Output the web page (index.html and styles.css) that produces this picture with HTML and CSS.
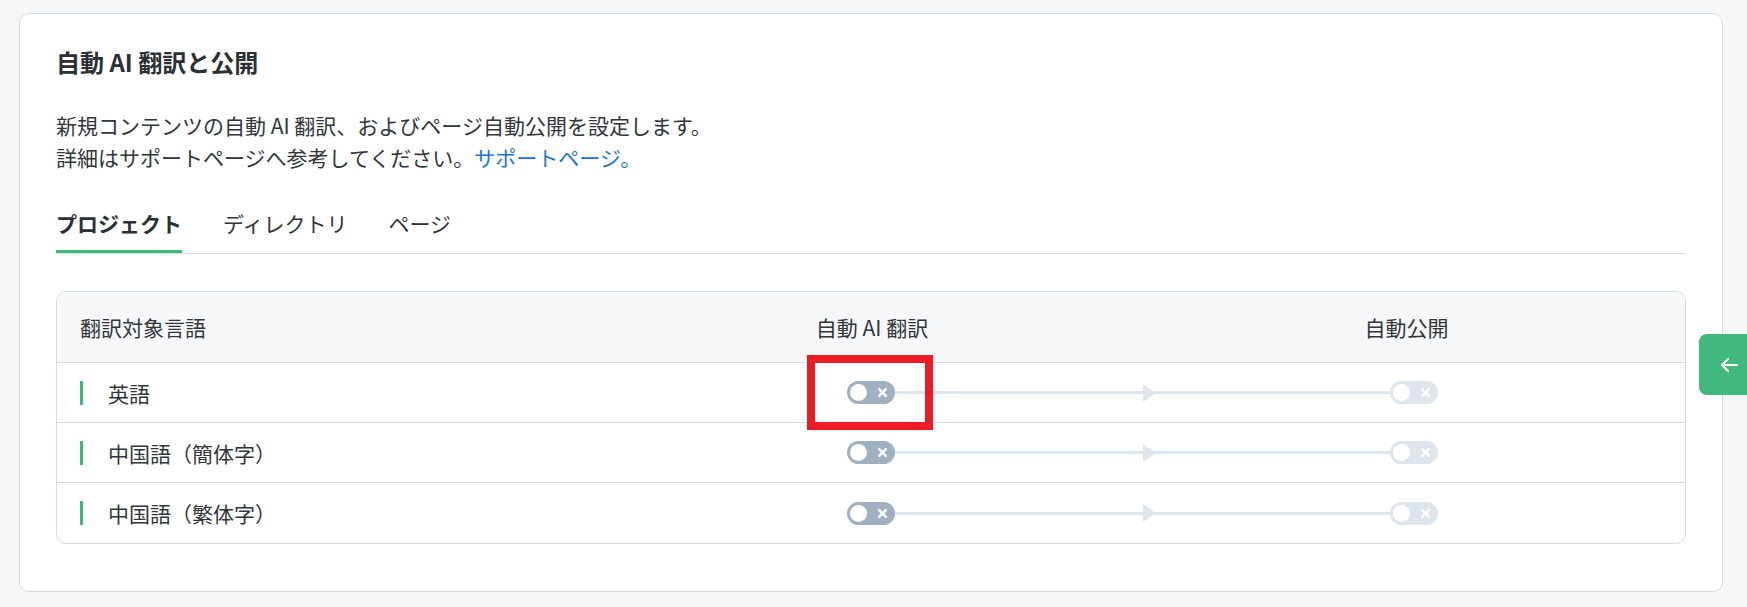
FILE: index.html
```html
<!DOCTYPE html>
<html lang="ja">
<head>
<meta charset="utf-8">
<title>自動 AI 翻訳と公開</title>
<link rel="stylesheet" href="styles.css">
</head>
<body>
  <section class="card">
    <h2 class="title">自動 AI 翻訳と公開</h2>
    <p class="desc">新規コンテンツの自動 AI 翻訳、およびページ自動公開を設定します。<br>詳細はサポートページへ参考してください。<a href="#" class="link">サポートページ。</a></p>

    <nav class="tabs">
      <span class="tab active">プロジェクト</span>
      <span class="tab">ディレクトリ</span>
      <span class="tab">ページ</span>
    </nav>

    <div class="table">
      <div class="row head">
        <div class="cell lang-head">翻訳対象言語</div>
        <div class="cell center">自動 AI 翻訳</div>
        <div class="cell center">自動公開</div>
      </div>

      <div class="row">
        <div class="cell lang"><span class="bar"></span>英語</div>
        <div class="flow">
          <span class="toggle dark"><span class="knob"></span><svg class="x" viewBox="0 0 10 10"><path d="M2 2L8 8M8 2L2 8"/></svg></span>
          <span class="line"><span class="arrow"></span></span>
          <span class="toggle light"><span class="knob"></span><svg class="x" viewBox="0 0 10 10"><path d="M2 2L8 8M8 2L2 8"/></svg></span>
        </div>
      </div>

      <div class="row">
        <div class="cell lang"><span class="bar"></span>中国語（簡体字）</div>
        <div class="flow">
          <span class="toggle dark"><span class="knob"></span><svg class="x" viewBox="0 0 10 10"><path d="M2 2L8 8M8 2L2 8"/></svg></span>
          <span class="line"><span class="arrow"></span></span>
          <span class="toggle light"><span class="knob"></span><svg class="x" viewBox="0 0 10 10"><path d="M2 2L8 8M8 2L2 8"/></svg></span>
        </div>
      </div>

      <div class="row last">
        <div class="cell lang"><span class="bar"></span>中国語（繁体字）</div>
        <div class="flow">
          <span class="toggle dark"><span class="knob"></span><svg class="x" viewBox="0 0 10 10"><path d="M2 2L8 8M8 2L2 8"/></svg></span>
          <span class="line"><span class="arrow"></span></span>
          <span class="toggle light"><span class="knob"></span><svg class="x" viewBox="0 0 10 10"><path d="M2 2L8 8M8 2L2 8"/></svg></span>
        </div>
      </div>
    </div>
  </section>

  <div class="highlight"></div>

  <button class="side-tab" type="button" aria-label="戻る">
    <svg viewBox="0 0 18 16" class="side-arrow"><path d="M17 8H2M8 2L2 8L8 14"/></svg>
  </button>
</body>
</html>
```

FILE: styles.css
```css
* { box-sizing: border-box; }

html, body {
  margin: 0;
  background: #f5f6f8;
}

body {
  position: relative;
  padding: 13px 24px 0 19px;
  height: 607px;
  overflow: hidden;
  font-family: "Noto Sans CJK JP", "Noto Sans", sans-serif;
  font-size: 21px;
  color: #31363b;
}

.card {
  background: #ffffff;
  border: 1px solid #d3dbe3;
  border-radius: 10px;
  padding: 32px 36px 47px 36px;
}

.title {
  margin: 0;
  font-size: 24px;
  line-height: 32px;
  font-weight: 700;
  color: #2b3035;
}

.desc {
  margin: 31px 0 0 0;
  line-height: 32px;
  color: #31363b;
}

.link {
  color: #1a73d9;
  text-decoration: none;
}

.tabs {
  margin-top: 34px;
  display: flex;
  gap: 41px;
  border-bottom: 1px solid #d3dbe3;
}

.tab {
  line-height: 32px;
  padding-bottom: 11px;
  border-bottom: 3px solid transparent;
  color: #31363b;
}

.tab.active {
  font-weight: 700;
  border-bottom-color: #3cb878;
  color: #2b3035;
}

.table {
  margin-top: 37px;
  border: 1px solid #d3dbe3;
  border-radius: 10px;
  overflow: hidden;
}

.row {
  display: grid;
  grid-template-columns: 559px 512px 1fr;
  height: 60px;
  border-bottom: 1px solid #d3dbe3;
  align-items: center;
}

.row.last { border-bottom: none; height: 60px; }

.row.head {
  height: 71px;
  background: #f6f7f9;
}

.cell {
  display: flex;
  align-items: center;
}

.center { justify-content: center; }

.lang-head { padding-left: 23px; }

.lang { padding-left: 23px; }

.bar {
  width: 3px;
  height: 24px;
  background: #3cb878;
  margin-right: 25px;
}

.flow {
  grid-column: 2 / 4;
  display: flex;
  align-items: center;
  padding: 0 247px 0 231px;
}

.toggle {
  position: relative;
  flex: none;
  width: 48px;
  height: 23px;
  border-radius: 12px;
  display: flex;
  align-items: center;
  justify-content: space-between;
  padding: 0 7px 0 3px;
}

.toggle.dark { background: #9fb0c0; }
.toggle.light { background: #dfe5ec; }

.knob {
  width: 17px;
  height: 17px;
  border-radius: 50%;
  background: #ffffff;
}

.x {
  width: 11px;
  height: 11px;
}

.x path {
  stroke: #ffffff;
  stroke-width: 2.2;
  stroke-linecap: round;
  fill: none;
}

.line {
  position: relative;
  flex: 1;
  height: 3px;
  background: #dfe5ec;
}

.arrow {
  position: absolute;
  left: 50%;
  top: 50%;
  margin-top: -9px;
  width: 0;
  height: 0;
  border-top: 9px solid transparent;
  border-bottom: 9px solid transparent;
  border-left: 13px solid #dfe5ec;
}

.highlight {
  position: absolute;
  left: 807px;
  top: 355px;
  width: 126px;
  height: 75px;
  border: 8px solid #ed1c24;
}

.side-tab {
  position: absolute;
  right: 0;
  top: 334px;
  width: 48px;
  height: 61px;
  border: none;
  border-radius: 8px 0 0 8px;
  background: #41b87c;
  padding: 0 0 0 21px;
  display: flex;
  align-items: center;
}

.side-arrow {
  width: 18px;
  height: 16px;
}

.side-arrow path {
  stroke: #ffffff;
  stroke-width: 2.2;
  stroke-linecap: round;
  stroke-linejoin: round;
  fill: none;
}
```
